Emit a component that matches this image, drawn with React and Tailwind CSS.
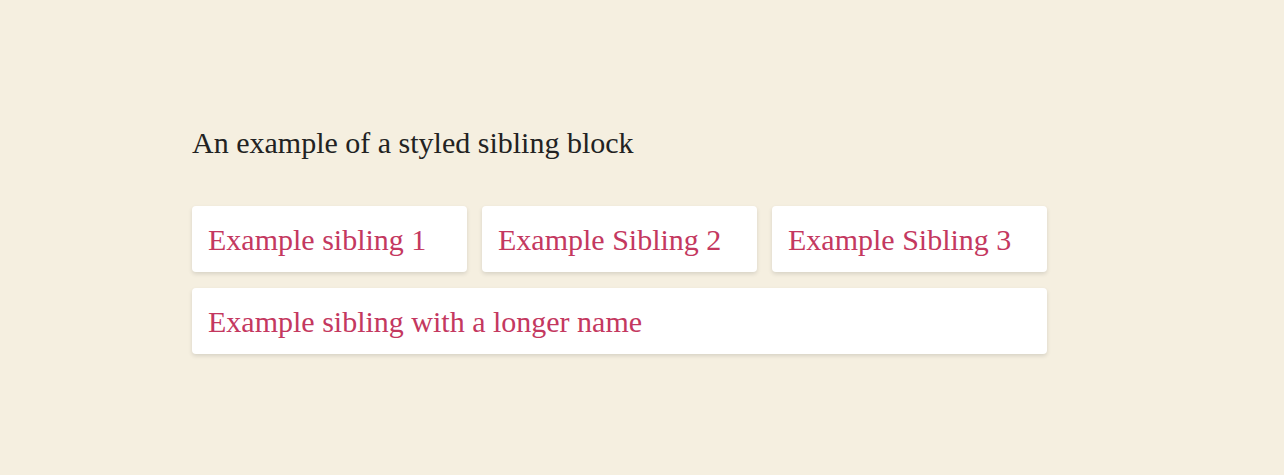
import React from 'react';

const siblings = [
  { id: 1, label: 'Example sibling 1' },
  { id: 2, label: 'Example Sibling 2' },
  { id: 3, label: 'Example Sibling 3' },
  { id: 4, label: 'Example sibling with a longer name', wide: true },
];

const App = () => {
  return (
    <div className="min-h-[475px] bg-[#f5efe0] font-['Liberation_Serif',serif]">
      <div className="pl-[192px] pt-[124px]">
        <h2 className="text-[30px] leading-[38px] text-[#222]">An example of a styled sibling block</h2>

        {/* Sibling cards */}
        <div className="mt-[44px] grid w-[855px] grid-cols-[275px_275px_275px] gap-x-[15px] gap-y-[16px]">
          {siblings.map((s) => (
            <div
              key={s.id}
              className={`flex h-[66px] items-center rounded-[4px] bg-white px-4 shadow-[0_2px_4px_rgba(0,0,0,0.12)] ${
                s.wide ? 'col-span-3' : ''
              }`}
            >
              <span className="text-[30px] text-[#c4385f]">{s.label}</span>
            </div>
          ))}
        </div>
      </div>
    </div>
  );
};

export default App;
